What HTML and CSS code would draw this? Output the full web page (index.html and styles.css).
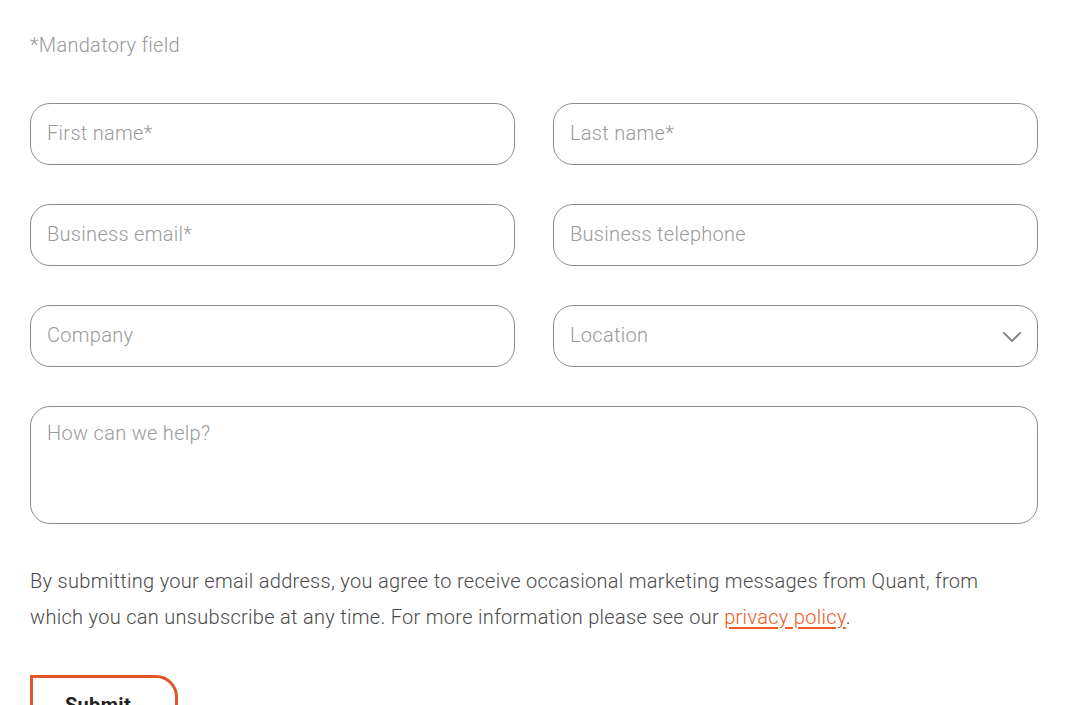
FILE: index.html
```html
<!DOCTYPE html>
<html lang="en">
  <head>
    <meta charset="UTF-8" />
    <meta name="viewport" content="width=device-width, initial-scale=1.0" />
    <title>Contact</title>
    <link rel="stylesheet" href="styles.css">
  </head>
  <body>
    <form class="contact-form" onsubmit="return false;">
      <p class="mandatory-note">*Mandatory field</p>

      <div class="form-grid">
        <input type="text" name="first_name" placeholder="First name*" required />
        <input type="text" name="last_name" placeholder="Last name*" required />
        <input type="email" name="email" placeholder="Business email*" required />
        <input type="tel" name="phone" placeholder="Business telephone" />
        <input type="text" name="company" placeholder="Company" />
        <div class="select-wrap">
          <select name="location" required>
            <option value="" selected disabled hidden>Location</option>
            <option value="uk">United Kingdom</option>
            <option value="us">United States</option>
          </select>
          <svg class="select-arrow" width="18" height="10" viewBox="0 0 18 10">
            <path d="M1 1 L9 9 L17 1" fill="none" stroke="#888" stroke-width="2" stroke-linecap="round" stroke-linejoin="round" />
          </svg>
        </div>
        <textarea name="message" placeholder="How can we help?"></textarea>
      </div>

      <p class="consent">
        By submitting your email address, you agree to receive occasional
        marketing messages from Quant, from which you can unsubscribe at any
        time. For more information please see our
        <a href="#">privacy policy</a>.
      </p>

      <button type="submit" class="submit-btn">Submit</button>
    </form>
  </body>
</html>
```

FILE: styles.css
```css
* {
  margin: 0;
  padding: 0;
  box-sizing: border-box;
  font-family: Roboto, "Liberation Sans", sans-serif;
  letter-spacing: 0.3px;
}
body {
  background: #fff;
}
.contact-form {
  padding: 31px 48px 40px 30px;
}
.mandatory-note {
  font-size: 20px;
  font-weight: 300;
  line-height: 28px;
  color: #999;
  margin-bottom: 44px;
}
.form-grid {
  display: grid;
  grid-template-columns: 1fr 1fr;
  column-gap: 38px;
  row-gap: 39px;
}
.form-grid input,
.form-grid select,
.form-grid textarea {
  width: 100%;
  height: 62px;
  padding: 0 16px 2px;
  border: 1px solid #8c8c8c;
  border-radius: 20px;
  background: #fff;
  font-size: 20px;
  font-weight: 300;
  color: #444;
  outline: none;
}
.form-grid ::placeholder {
  color: #9a9a9a;
  opacity: 1;
}
.select-wrap {
  position: relative;
}
.form-grid select {
  appearance: none;
  -webkit-appearance: none;
  color: #9a9a9a;
  cursor: pointer;
}
.select-arrow {
  position: absolute;
  right: 17px;
  top: 27px;
  pointer-events: none;
}
.form-grid textarea {
  grid-column: 1 / -1;
  height: 118px;
  padding-top: 14px;
  line-height: 24px;
  resize: none;
}
.consent {
  max-width: 990px;
  margin-top: 39px;
  font-size: 20px;
  font-weight: 300;
  line-height: 36px;
  color: #4a4a4a;
}
.consent a {
  color: #ee5a24;
  text-decoration: underline;
  text-underline-offset: 3px;
}
.submit-btn {
  margin-top: 40px;
  padding: 15px 44px 16px 32px;
  background: #fff;
  border: 3px solid #e0552a;
  border-radius: 0 22px 0 0;
  font-size: 20px;
  font-weight: 700;
  color: #222;
  cursor: pointer;
}
```
